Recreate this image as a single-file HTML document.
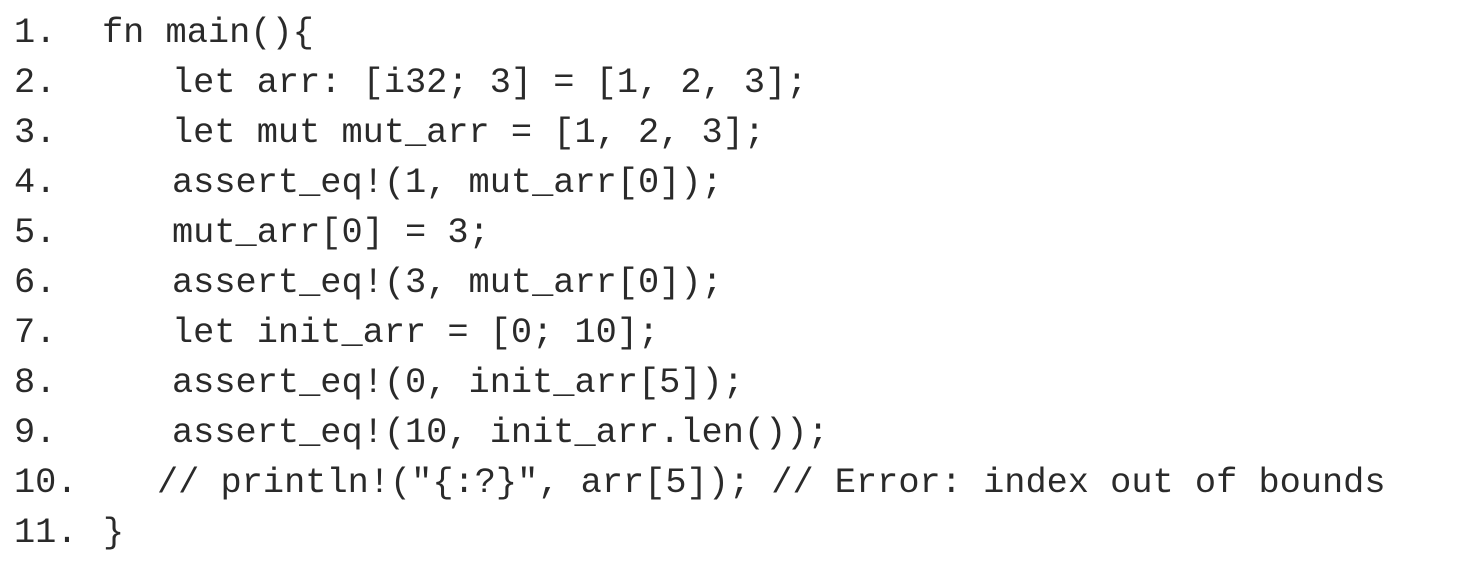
<!DOCTYPE html>
<html><head><meta charset="utf-8"><style>
html,body{margin:0;padding:0;background:#fff;width:1467px;height:573px;overflow:hidden}
.l{position:absolute;font-family:"Liberation Mono",monospace;font-size:35.3px;line-height:50px;color:#2a2a2a;white-space:pre}
</style></head><body>
<div class="l" style="left:14px;top:8px">1.</div><div class="l" style="left:102px;top:8px">fn main(){</div>
<div class="l" style="left:14px;top:58px">2.</div><div class="l" style="left:172px;top:58px">let arr: [i32; 3] = [1, 2, 3];</div>
<div class="l" style="left:14px;top:108px">3.</div><div class="l" style="left:172px;top:108px">let mut mut_arr = [1, 2, 3];</div>
<div class="l" style="left:14px;top:158px">4.</div><div class="l" style="left:172px;top:158px">assert_eq!(1, mut_arr[0]);</div>
<div class="l" style="left:14px;top:208px">5.</div><div class="l" style="left:172px;top:208px">mut_arr[0] = 3;</div>
<div class="l" style="left:14px;top:258px">6.</div><div class="l" style="left:172px;top:258px">assert_eq!(3, mut_arr[0]);</div>
<div class="l" style="left:14px;top:308px">7.</div><div class="l" style="left:172px;top:308px">let init_arr = [0; 10];</div>
<div class="l" style="left:14px;top:358px">8.</div><div class="l" style="left:172px;top:358px">assert_eq!(0, init_arr[5]);</div>
<div class="l" style="left:14px;top:408px">9.</div><div class="l" style="left:172px;top:408px">assert_eq!(10, init_arr.len());</div>
<div class="l" style="left:14px;top:458px">10.</div><div class="l" style="left:157px;top:458px">// println!("{:?}", arr[5]); // Error: index out of bounds</div>
<div class="l" style="left:14px;top:508px">11.</div><div class="l" style="left:103px;top:508px">}</div>
</body></html>
